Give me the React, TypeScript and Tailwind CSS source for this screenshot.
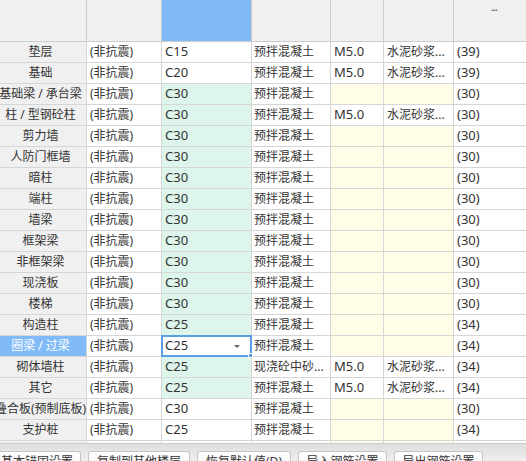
import React from "react";

type Row = {
  name: string;
  grade: string;
  gradeBg: "green" | "white";
  concrete: string;
  mortar?: string;
  mortarType?: string;
  value: string;
};

const rows: Row[] = [
  { name: "垫层", grade: "C15", gradeBg: "white", concrete: "预拌混凝土", mortar: "M5.0", mortarType: "水泥砂浆...", value: "(39)" },
  { name: "基础", grade: "C20", gradeBg: "white", concrete: "预拌混凝土", mortar: "M5.0", mortarType: "水泥砂浆...", value: "(39)" },
  { name: "基础梁 / 承台梁", grade: "C30", gradeBg: "green", concrete: "预拌混凝土", value: "(30)" },
  { name: "柱 / 型钢砼柱", grade: "C30", gradeBg: "green", concrete: "预拌混凝土", mortar: "M5.0", mortarType: "水泥砂浆...", value: "(30)" },
  { name: "剪力墙", grade: "C30", gradeBg: "green", concrete: "预拌混凝土", value: "(30)" },
  { name: "人防门框墙", grade: "C30", gradeBg: "green", concrete: "预拌混凝土", value: "(30)" },
  { name: "暗柱", grade: "C30", gradeBg: "green", concrete: "预拌混凝土", value: "(30)" },
  { name: "端柱", grade: "C30", gradeBg: "green", concrete: "预拌混凝土", value: "(30)" },
  { name: "墙梁", grade: "C30", gradeBg: "green", concrete: "预拌混凝土", value: "(30)" },
  { name: "框架梁", grade: "C30", gradeBg: "green", concrete: "预拌混凝土", value: "(30)" },
  { name: "非框架梁", grade: "C30", gradeBg: "green", concrete: "预拌混凝土", value: "(30)" },
  { name: "现浇板", grade: "C30", gradeBg: "green", concrete: "预拌混凝土", value: "(30)" },
  { name: "楼梯", grade: "C30", gradeBg: "green", concrete: "预拌混凝土", value: "(30)" },
  { name: "构造柱", grade: "C25", gradeBg: "green", concrete: "预拌混凝土", value: "(34)" },
  { name: "圈梁 / 过梁", grade: "C25", gradeBg: "green", concrete: "预拌混凝土", value: "(34)" },
  { name: "砌体墙柱", grade: "C25", gradeBg: "green", concrete: "现浇砼中砂...", mortar: "M5.0", mortarType: "水泥砂浆...", value: "(34)" },
  { name: "其它", grade: "C25", gradeBg: "green", concrete: "预拌混凝土", mortar: "M5.0", mortarType: "水泥砂浆...", value: "(34)" },
  { name: "叠合板(预制底板)", grade: "C30", gradeBg: "white", concrete: "预拌混凝土", value: "(30)" },
  { name: "支护桩", grade: "C25", gradeBg: "white", concrete: "预拌混凝土", value: "(34)" },
];

const SELECTED = 14;

const cols = "grid grid-cols-[87px_75px_90px_79px_53px_70px_80px]";
const cell = "h-[21px] border-r border-b border-[#d6d6d6] flex items-center overflow-hidden whitespace-nowrap";

const buttons = ["基本锚固设置", "复制到其他楼层", "恢复默认值(D)", "导入钢筋设置", "导出钢筋设置"];
const btnWidths = ["w-[88px]", "w-[102px]", "w-[94px]", "w-[89px]", "w-[89px]"];

export default function App() {
  return (
    <div
      className="w-[526px] h-[461px] overflow-hidden bg-white text-[12px] text-[#333]"
      style={{ fontFamily: '"Noto Sans", "Noto Sans CJK SC", sans-serif' }}
    >
      <div className="h-[443px] overflow-hidden">
        {/* header */}
        <div className={cols}>
          <div className="h-[42px] bg-[#f0f0f0] border-r border-b border-[#cccccc]" />
          <div className="h-[42px] bg-[#f0f0f0] border-r border-b border-[#cccccc]" />
          <div className="h-[42px] bg-[#80bbf8] border-r border-b border-[#cccccc]" />
          <div className="h-[42px] bg-[#f0f0f0] border-r border-b border-[#cccccc]" />
          <div className="h-[42px] bg-[#f0f0f0] border-r border-b border-[#cccccc]" />
          <div className="h-[42px] bg-[#f0f0f0] border-r border-b border-[#cccccc]" />
          <div className="h-[42px] bg-[#f0f0f0] border-b border-[#cccccc] flex justify-center pt-[1px] text-[11px] leading-none tracking-[-1px] text-[#444]">
            ...
          </div>
        </div>

        {rows.map((r, i) => {
          const sel = i === SELECTED;
          return (
            <div key={r.name} className={cols}>
              <div
                className={`${cell} justify-center pr-[5px] ${
                  sel ? "bg-[#80bbf8] text-white" : "bg-[#f0f0f0]"
                }`}
              >
                {r.name}
              </div>
              <div className={`${cell} pl-[3px]`}>(非抗震)</div>
              {sel ? (
                <div className={`${cell} relative overflow-visible bg-white`}>
                  <div className="absolute -left-[1px] -top-[1px] w-[91px] h-[22px] border-2 border-[#5a9ee6] flex items-center pl-[2px] bg-white">
                    <span className="text-[13px]">{r.grade}</span>
                    <span className="ml-auto mr-[10px] w-0 h-0 border-l-[3px] border-r-[3px] border-t-[3px] border-l-transparent border-r-transparent border-t-[#666]" />
                    <span className="absolute -right-[3px] -bottom-[3px] w-[5px] h-[5px] bg-[#5a9ee6] border border-white" />
                  </div>
                </div>
              ) : (
                <div
                  className={`${cell} pl-[3px] text-[13px] ${
                    r.gradeBg === "green" ? "bg-[#ddf5ea]" : "bg-white"
                  }`}
                >
                  {r.grade}
                </div>
              )}
              <div className={`${cell} pl-[2px]`}>{r.concrete}</div>
              {r.mortar ? (
                <>
                  <div className={`${cell} pl-[3px] text-[13px]`}>{r.mortar}</div>
                  <div className={`${cell} pl-[3px]`}>{r.mortarType}</div>
                </>
              ) : (
                <>
                  <div className={`${cell} bg-[#fffde8]`} />
                  <div className={`${cell} bg-[#fffde8]`} />
                </>
              )}
              <div className={`${cell} border-r-0 pl-[3px] text-[13px]`}>{r.value}</div>
            </div>
          );
        })}

        {/* partial next row */}
        <div className={cols}>
          <div className={`${cell} bg-[#f0f0f0]`} />
          <div className={cell} />
          <div className={cell} />
          <div className={cell} />
          <div className={`${cell} bg-[#fffde8]`} />
          <div className={`${cell} bg-[#fffde8]`} />
          <div className={`${cell} border-r-0`} />
        </div>
      </div>

      {/* bottom button bar */}
      <div className="h-[18px] border-t border-[#c9c9c9] bg-gradient-to-b from-[#dedede] to-[#efefef] flex gap-[7px] pt-[7px] -ml-[7px]">
        {buttons.map((b, i) => (
          <div
            key={b}
            className={`${btnWidths[i]} h-[24px] shrink-0 rounded-[3px] border border-[#c4c4c4] bg-gradient-to-b from-white to-[#f4f4f4] flex justify-center pt-[4px] text-[12px] text-[#333] leading-none`}
          >
            {b}
          </div>
        ))}
      </div>
    </div>
  );
}
